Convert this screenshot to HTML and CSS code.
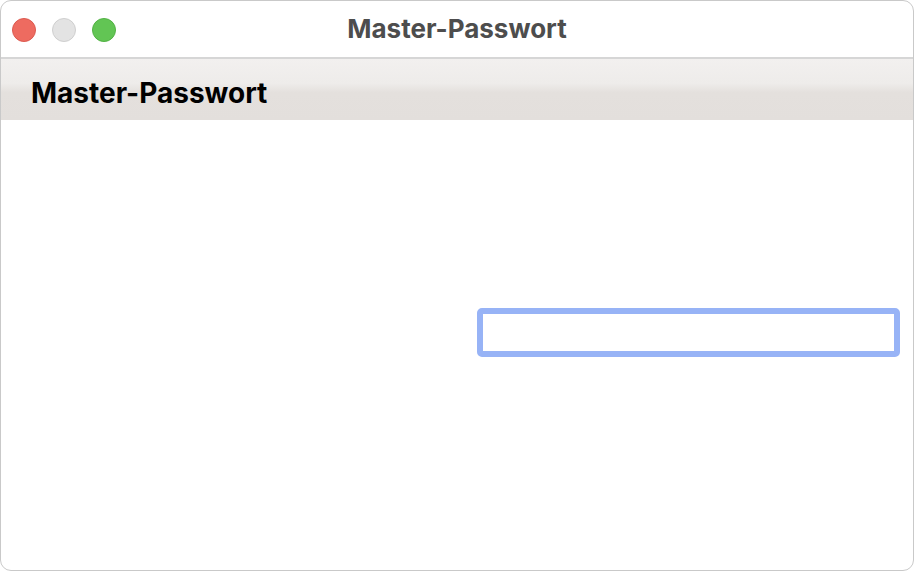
FILE: index.html
```html
<!DOCTYPE html>
<html lang="de">
<head>
  <meta charset="UTF-8" />
  <meta name="viewport" content="width=device-width, initial-scale=1.0"/>
  <title>Master-Passwort</title>
  <link rel="stylesheet" href="styles.css">
</head>
<body>
  <div class="window">
    <div class="titlebar">
      <div class="lights">
        <span class="light red"></span>
        <span class="light grey"></span>
        <span class="light green"></span>
      </div>
      <div class="win-title">Master-Passwort</div>
    </div>

    <div class="page-head">
      <h1>Master-Passwort</h1>
    </div>

    <div class="content">
      <div class="form-row">
        <label class="field-label" for="pw"></label>
        <input type="password" id="pw" class="field">
      </div>
    </div>
  </div>
</body>
</html>
```

FILE: styles.css
```css
* { margin: 0; padding: 0; box-sizing: border-box; }
html, body { height: 100%; }
body {
  background: #fff;
  font-family: 'Inter', 'Noto Sans', sans-serif;
  overflow: hidden;
}
.window {
  height: 571px;
  display: flex;
  flex-direction: column;
  border: 1px solid #c9c9c9;
  border-radius: 11px;
  overflow: hidden;
  background: #fff;
}
.titlebar {
  height: 58px;
  flex: none;
  display: flex;
  align-items: center;
  position: relative;
  border-bottom: 2px solid #d6d6d6;
}
.lights {
  display: flex;
  gap: 16px;
  padding-left: 11px;
  padding-top: 2px;
}
.light {
  width: 24px; height: 24px;
  border-radius: 50%;
}
.light.red { background: #ee6b60; border: 1px solid #dc5a50; }
.light.grey { background: #e3e3e3; border: 1px solid #cfcfcf; }
.light.green { background: #62c554; border: 1px solid #52b244; }
.win-title {
  position: absolute;
  left: 0; right: 0;
  top: 12px;
  text-align: center;
  font-size: 26px;
  font-weight: 700;
  color: #4d4d4d;
}
.page-head {
  height: 61px;
  flex: none;
  display: flex;
  align-items: center;
  padding: 6px 0 0 30px;
  background: linear-gradient(#f2f0ef, #eeecea 40%, #e4e0dd 55%, #e3dfdc);
}
.page-head h1 {
  font-size: 28px;
  font-weight: 700;
  color: #000;
}
.content {
  flex: 1;
  padding: 188px 13px 0 0;
}
.form-row {
  display: grid;
  grid-template-columns: 1fr 423px;
}
.field {
  height: 49px;
  border: 6px solid #97b3f6;
  border-radius: 5px;
  outline: none;
  background: #fff;
}
```
